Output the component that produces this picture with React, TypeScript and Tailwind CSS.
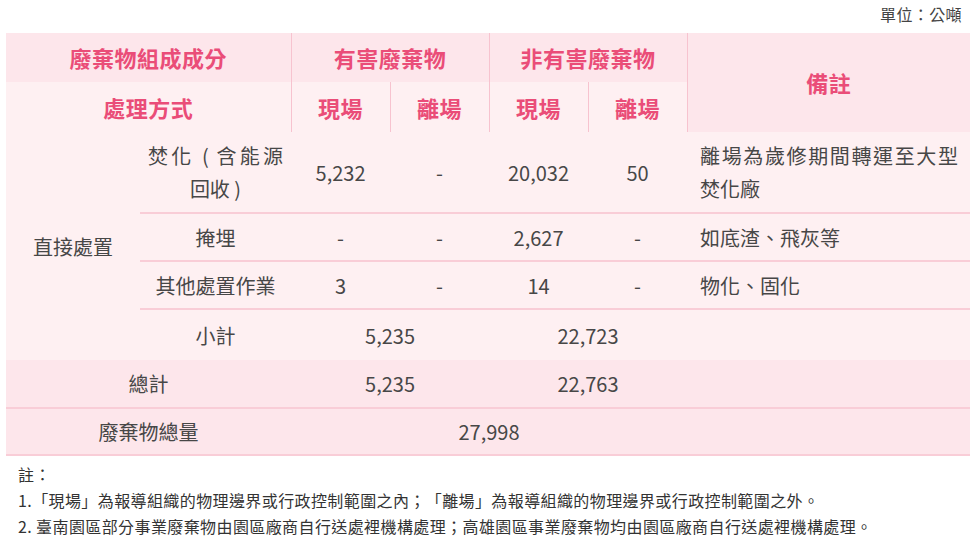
const FONT = "font-['Noto_Sans_CJK_TC','Noto_Sans',sans-serif]";

const th = "p-0 text-[22px] font-bold tracking-[0.5px] text-[#ea4d78] text-center align-middle";
const td = "px-2 py-[6px] text-[20px] leading-[33px] text-[#474747] text-center align-middle";
const line = "border-b-2 border-[#f9cdd7]";
const vline = "border-r border-[#f7c3cf]";

type Row = {
  name: string;
  hOn: string;
  hOff: string;
  nOn: string;
  nOff: string;
  note: string;
  h: string;
};

const rows: Row[] = [
  { name: "焚化 ( 含能源回收 )", hOn: "5,232", hOff: "-", nOn: "20,032", nOff: "50", note: "離場為歲修期間轉運至大型焚化廠", h: "h-[81px]" },
  { name: "掩埋", hOn: "-", hOff: "-", nOn: "2,627", nOff: "-", note: "如底渣、飛灰等", h: "h-[48px]" },
  { name: "其他處置作業", hOn: "3", hOff: "-", nOn: "14", nOff: "-", note: "物化、固化", h: "h-[48px]" },
];

export default function App() {
  return (
    <div className={`${FONT} w-[976px] h-[540px] bg-white px-[6px] [text-spacing-trim:space-all]`}>
      <div className="h-[28px] mb-[5px] flex items-center justify-end pr-[8px] text-[16px] tracking-[0.4px] text-[#444]">
        單位：公噸
      </div>

      <table className="w-full table-fixed border-collapse">
        <colgroup>
          <col className="w-[134px]" />
          <col className="w-[151px]" />
          <col className="w-[99px]" />
          <col className="w-[99px]" />
          <col className="w-[99px]" />
          <col className="w-[99px]" />
          <col />
        </colgroup>
        <thead>
          <tr className="h-[49px] bg-[#fde6eb]">
            <th colSpan={2} className={`${th} ${vline}`}>廢棄物組成成分</th>
            <th colSpan={2} className={`${th} ${vline}`}>有害廢棄物</th>
            <th colSpan={2} className={`${th} ${vline}`}>非有害廢棄物</th>
            <th rowSpan={2} className={th}>備註</th>
          </tr>
          <tr className="h-[50px] bg-[#fef0f2]">
            <th colSpan={2} className={`${th} ${vline}`}>處理方式</th>
            <th className={`${th} ${vline}`}>現場</th>
            <th className={`${th} ${vline}`}>離場</th>
            <th className={`${th} ${vline}`}>現場</th>
            <th className={`${th} ${vline}`}>離場</th>
          </tr>
        </thead>
        <tbody className="bg-[#fef0f2]">
          {rows.map((r, i) => (
            <tr key={r.name} className={r.h}>
              {i === 0 && (
                <td rowSpan={4} className={td}>直接處置</td>
              )}
              <td className={`${td} ${line} text-justify [text-align-last:center]`}>{r.name}</td>
              <td className={`${td} ${line}`}>{r.hOn}</td>
              <td className={`${td} ${line}`}>{r.hOff}</td>
              <td className={`${td} ${line}`}>{r.nOn}</td>
              <td className={`${td} ${line}`}>{r.nOff}</td>
              <td className={`${td} ${line} pl-[13px] pr-[12px] text-justify [text-align-last:left]`}>{r.note}</td>
            </tr>
          ))}
          <tr className="h-[51px]">
            <td className={td}>小計</td>
            <td colSpan={2} className={td}>5,235</td>
            <td colSpan={2} className={td}>22,723</td>
            <td className={td}></td>
          </tr>
          <tr className="h-[48px] bg-[#fde6eb]">
            <td colSpan={2} className={`${td} ${line}`}>總計</td>
            <td colSpan={2} className={`${td} ${line}`}>5,235</td>
            <td colSpan={2} className={`${td} ${line}`}>22,763</td>
            <td className={`${td} ${line}`}></td>
          </tr>
          <tr className="h-[47px] bg-[#fde6eb]">
            <td colSpan={2} className={`${td} ${line}`}>廢棄物總量</td>
            <td colSpan={4} className={`${td} ${line}`}>27,998</td>
            <td className={`${td} ${line}`}></td>
          </tr>
        </tbody>
      </table>

      <div className="mt-[5px] pl-[12px] text-[16px] leading-[26px] tracking-[0.4px] text-[#333]">
        <p>註：</p>
        <p>1.「現場」為報導組織的物理邊界或行政控制範圍之內；「離場」為報導組織的物理邊界或行政控制範圍之外。</p>
        <p>2. 臺南園區部分事業廢棄物由園區廠商自行送處裡機構處理；高雄園區事業廢棄物均由園區廠商自行送處裡機構處理。</p>
      </div>
    </div>
  );
}
